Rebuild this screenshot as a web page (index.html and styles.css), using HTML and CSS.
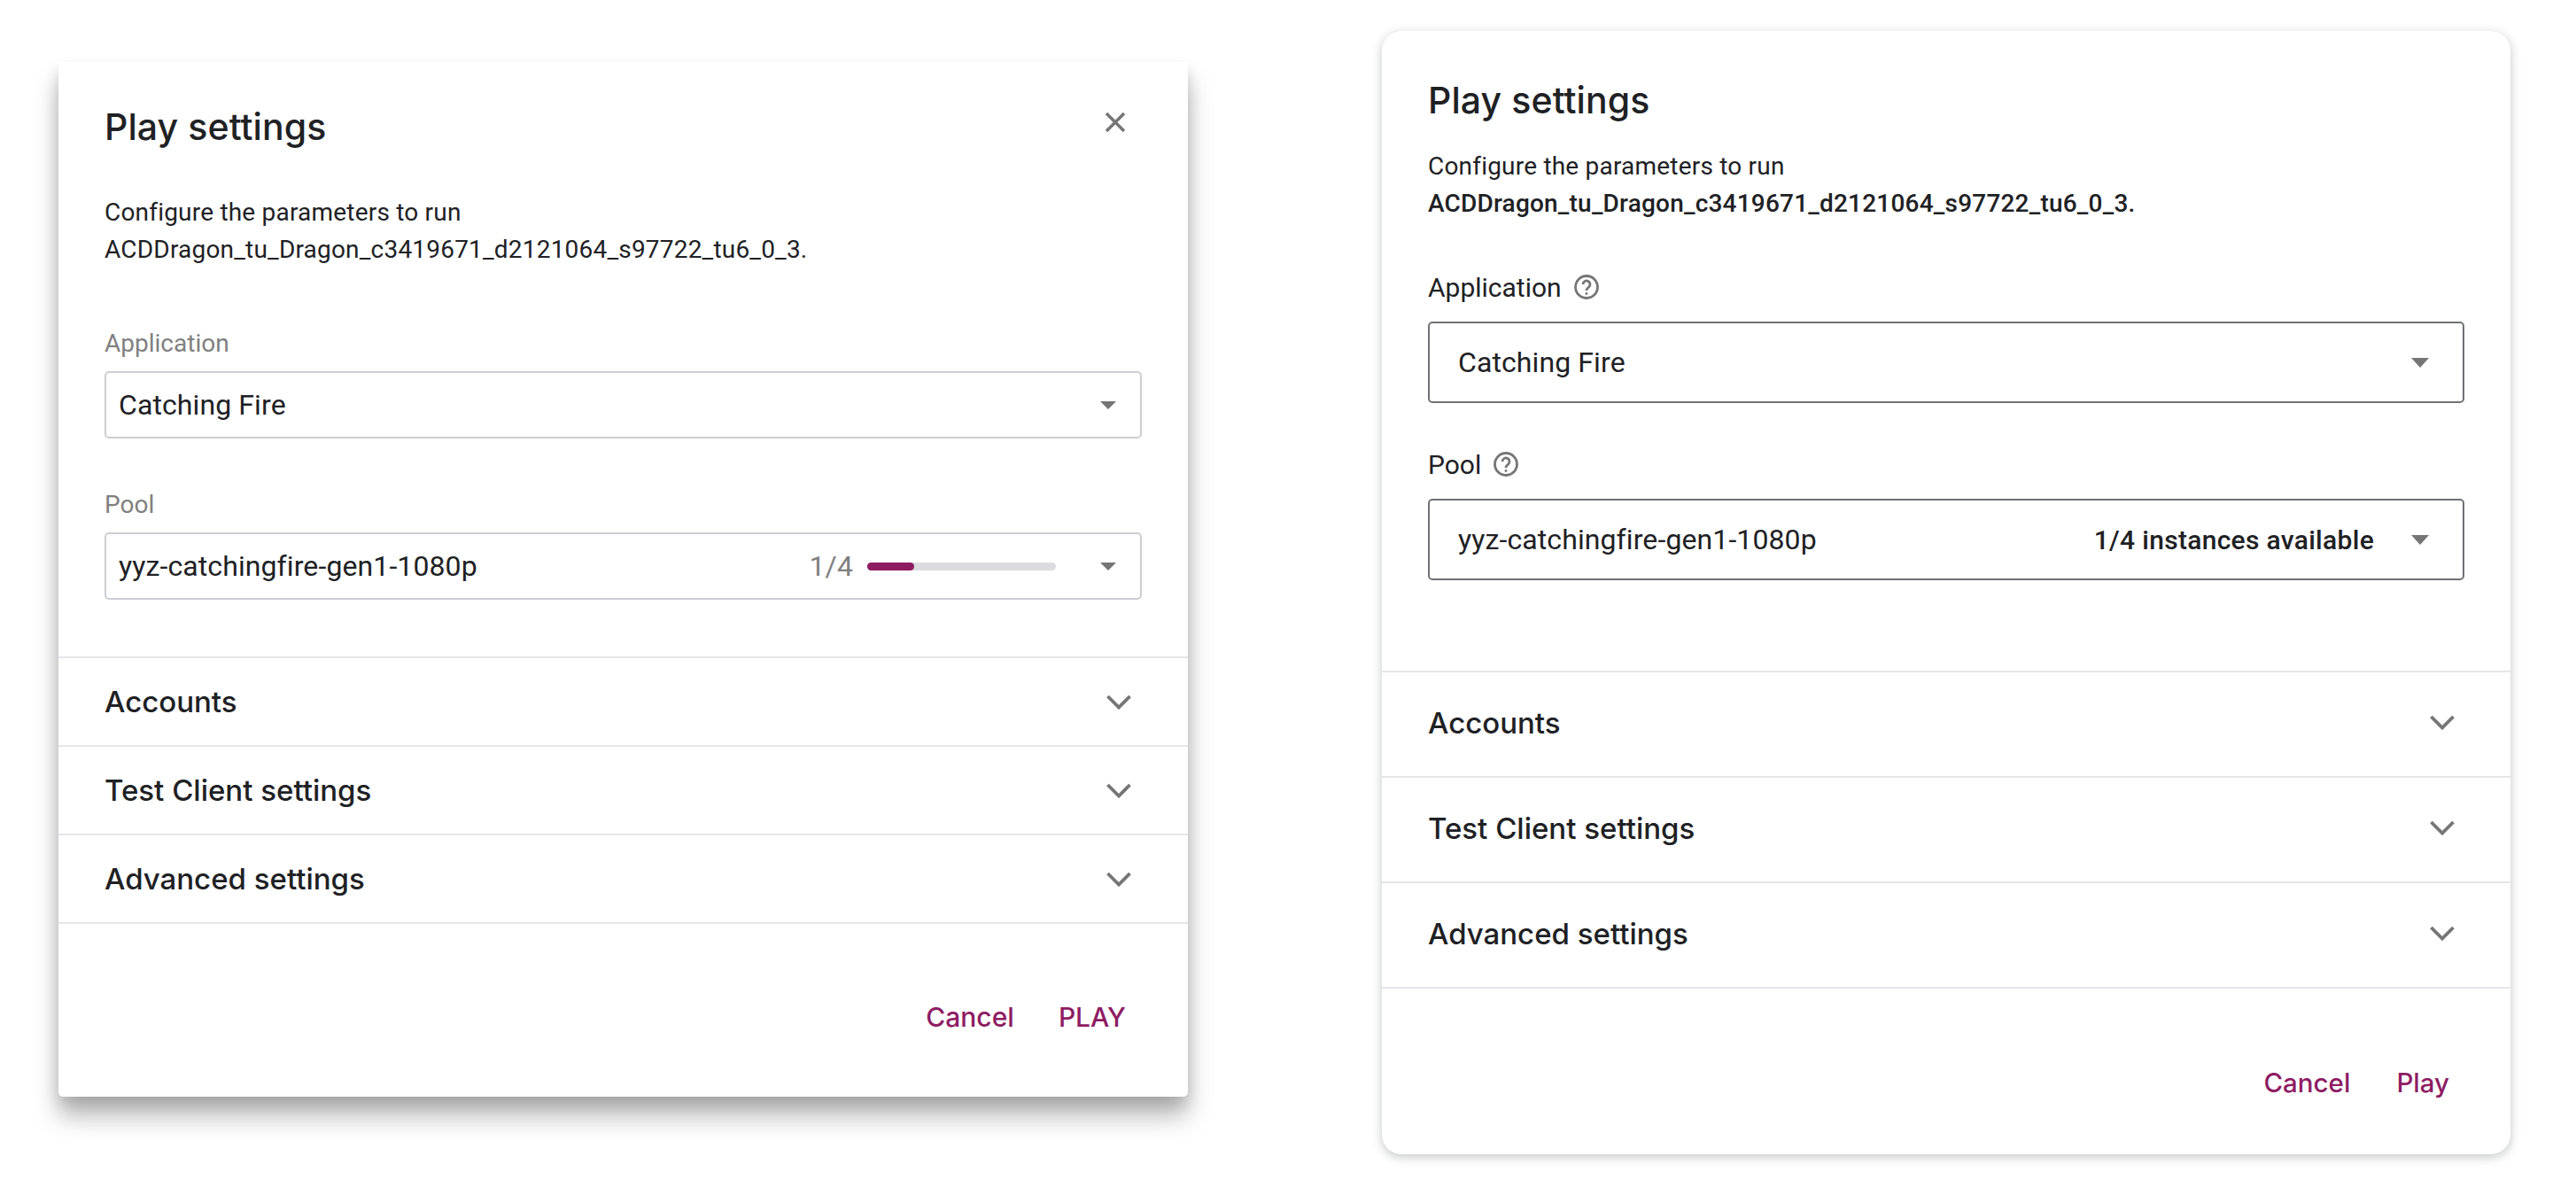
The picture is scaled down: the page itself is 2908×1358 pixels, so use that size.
FILE: index.html
```html
<!DOCTYPE html>
<html lang="en">
<head>
	<meta charset="UTF-8">
	<title>Play settings</title>
	<link rel="stylesheet" href="styles.css">
</head>
<body>
	<div class="page">
		<section class="dialog old">
			<header class="dialog-head">
				<h2>Play settings</h2>
				<svg class="close" viewBox="0 0 24 24"><path d="M2 2 22 22M22 2 2 22"/></svg>
			</header>
			<p class="desc">Configure the parameters to run<br>ACDDragon_tu_Dragon_c3419671_d2121064_s97722_tu6_0_3.</p>
			<div class="field">
				<label>Application</label>
				<div class="select"><span class="value">Catching Fire</span><i class="caret"></i></div>
			</div>
			<div class="field">
				<label>Pool</label>
				<div class="select">
					<span class="value">yyz-catchingfire-gen1-1080p</span>
					<span class="count">1/4</span>
					<span class="bar"><span class="bar-fill"></span></span>
					<i class="caret"></i>
				</div>
			</div>
			<div class="rows">
				<div class="row">Accounts<svg class="chev" viewBox="0 0 28 17"><path d="M1.500 2 14 14.500 26.500 2"/></svg></div>
				<div class="row">Test Client settings<svg class="chev" viewBox="0 0 28 17"><path d="M1.500 2 14 14.500 26.500 2"/></svg></div>
				<div class="row">Advanced settings<svg class="chev" viewBox="0 0 28 17"><path d="M1.500 2 14 14.500 26.500 2"/></svg></div>
			</div>
			<footer class="actions"><a>Cancel</a><a>PLAY</a></footer>
		</section>

		<section class="dialog new">
			<header class="dialog-head">
				<h2>Play settings</h2>
			</header>
			<p class="desc">Configure the parameters to run<br><b>ACDDragon_tu_Dragon_c3419671_d2121064_s97722_tu6_0_3.</b></p>
			<div class="field">
				<label>Application <svg class="help" viewBox="0 0 28 28"><circle cx="14" cy="14" r="12.500"/><path d="M10 11a4 4 0 1 1 6.500 3.100c-1.500 1.200-2.500 1.900-2.500 3.900"/><circle class="dot" cx="14" cy="21.500" r="1.400"/></svg></label>
				<div class="select"><span class="value">Catching Fire</span><i class="caret"></i></div>
			</div>
			<div class="field">
				<label>Pool <svg class="help" viewBox="0 0 28 28"><circle cx="14" cy="14" r="12.500"/><path d="M10 11a4 4 0 1 1 6.500 3.100c-1.500 1.200-2.500 1.900-2.500 3.900"/><circle class="dot" cx="14" cy="21.500" r="1.400"/></svg></label>
				<div class="select">
					<span class="value">yyz-catchingfire-gen1-1080p</span>
					<span class="avail">1/4 instances available</span>
					<i class="caret"></i>
				</div>
			</div>
			<div class="rows">
				<div class="row">Accounts<svg class="chev" viewBox="0 0 28 17"><path d="M1.500 2 14 14.500 26.500 2"/></svg></div>
				<div class="row">Test Client settings<svg class="chev" viewBox="0 0 28 17"><path d="M1.500 2 14 14.500 26.500 2"/></svg></div>
				<div class="row">Advanced settings<svg class="chev" viewBox="0 0 28 17"><path d="M1.500 2 14 14.500 26.500 2"/></svg></div>
			</div>
			<footer class="actions"><a>Cancel</a><a>Play</a></footer>
		</section>
	</div>
</body>
</html>
```

FILE: styles.css
```css
*{
	margin: 0;
	padding: 0;
	box-sizing: border-box;
}
body{
	background: #fff;
	color: #202124;
	font-family: Roboto, "Liberation Sans", sans-serif;
}
.page{
	display: flex;
	align-items: flex-start;
	height: 1358px;
	padding: 35px 74px 0 66px;
	justify-content: space-between;
	overflow: hidden;
}
.dialog{
	background: #fff;
	flex: none;
}
.dialog h2{
	font: 450 41px/56px Inter, sans-serif;
	letter-spacing: .1px;
}
.desc{
	font-size: 28px;
	line-height: 42px;
	letter-spacing: .2px;
}
.select{
	display: flex;
	align-items: center;
	border-radius: 5px;
	font-size: 32px;
	letter-spacing: .1px;
}
.value{
	flex: 1;
}
.caret{
	width: 0;
	height: 0;
	border-style: solid;
	border-color: #757575 transparent transparent;
}
.rows{
	border-top: 2px solid #e6e6ea;
}
.row{
	display: flex;
	align-items: center;
	justify-content: space-between;
	padding: 0 64px 0 52px;
	border-bottom: 2px solid #e6e6ea;
	font: 450 33px Inter, sans-serif;
}
.chev{
	width: 28px;
	height: 17px;
	fill: none;
	stroke: #757575;
	stroke-width: 3.800;
}
.actions{
	display: flex;
	justify-content: flex-end;
	gap: 54px;
	padding-top: 84px;
	padding-right: 70px;
	font-family: Inter, sans-serif;
	font-weight: 450;
	line-height: 44px;
	color: #8e1c63;
}

/* left dialog */
.old{
	width: 1275px;
	height: 1168px;
	margin-top: 35px;
	border-radius: 0 0 5px 5px;
	box-shadow: 0 22px 28px rgba(0,0,0,.28), 0 8px 16px rgba(0,0,0,.12);
}
.old .dialog-head{
	display: flex;
	justify-content: space-between;
	align-items: flex-start;
	padding: 45px 70px 0 52px;
}
.close{
	width: 24px;
	height: 24px;
	margin-top: 11px;
	fill: none;
	stroke: #757575;
	stroke-width: 3.500;
}
.old .desc{
	padding: 48px 52px 0;
}
.old .field{
	margin-top: 57px;
	padding: 0 52px;
}
.old .desc + .field{
	margin-top: 67px;
}
.old label{
	display: block;
	height: 36px;
	font-size: 28px;
	line-height: 36px;
	color: #808080;
}
.old .select{
	height: 76px;
	margin-top: 13px;
	padding: 0 27px 0 14px;
	border: 2px solid #cdced4;
}
.old .caret{
	border-width: 9px 9px 0;
}
.count{
	margin-right: 16px;
	color: #808080;
}
.bar{
	width: 213px;
	height: 9px;
	margin-right: 50px;
	border-radius: 5px;
	background: #dadce0;
}
.bar-fill{
	display: block;
	width: 53px;
	height: 9px;
	border-radius: 5px;
	background: #8e1c63;
}
.old .rows{
	margin-top: 64px;
}
.old .row{
	height: 100px;
}
.old .actions{
	gap: 50px;
	padding-top: 83px;
	font-size: 30px;
}

/* right dialog */
.new{
	width: 1274px;
	height: 1268px;
	border-radius: 22px;
	box-shadow: 0 3px 12px rgba(60,64,67,.3);
}
.new .dialog-head{
	padding: 50px 52px 0;
}
.new .desc{
	padding: 26px 52px 0;
}
.new .desc b{
	font-weight: 500;
}
.new .field{
	margin-top: 47px;
	padding: 0 52px;
}
.new .desc + .field{
	margin-top: 51px;
}
.new label{
	display: flex;
	align-items: center;
	gap: 14px;
	height: 44px;
	font-size: 30px;
}
.help{
	width: 28px;
	height: 28px;
	fill: none;
	stroke: #757575;
	stroke-width: 2.800;
}
.help .dot{
	fill: #757575;
	stroke: none;
}
.new .select{
	height: 92px;
	margin-top: 17px;
	padding: 0 38px 0 32px;
	border: 2px solid #6f7175;
}
.new .caret{
	border-width: 11px 10px 0;
}
.avail{
	margin-right: 42px;
	font-size: 30px;
	font-weight: 500;
	letter-spacing: .3px;
}
.new .rows{
	margin-top: 102px;
}
.new .row{
	height: 119px;
	padding-right: 63px;
	padding-bottom: 4px;
}
.new .actions{
	gap: 52px;
	padding-right: 69px;
	font-size: 29.500px;
}
```
